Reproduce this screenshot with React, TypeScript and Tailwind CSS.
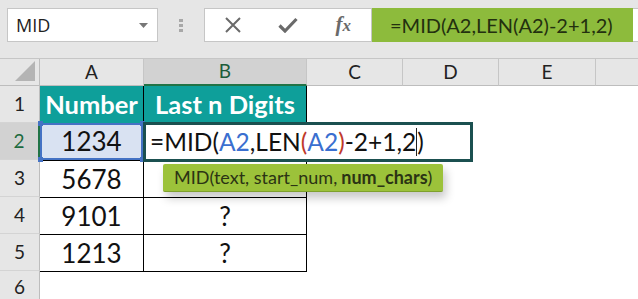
import React from "react";

const FONT = { fontFamily: "Lato, 'Liberation Sans', sans-serif" };

const cols = [
  { k: "A", w: 104 },
  { k: "B", w: 163 },
  { k: "C", w: 96 },
  { k: "D", w: 96 },
  { k: "E", w: 97 },
];

function RowHead({ n, active }: { n: number; active?: boolean }) {
  return (
    <div
      className={
        "w-[40px] shrink-0 flex items-center justify-center text-[19px] border-b border-[#d4d4d4] " +
        (active
          ? "bg-[#d2d2d2] text-[#1d6b3f] border-r-2 border-r-[#217346]"
          : "bg-[#e6e6e6] text-[#222] border-r border-r-[#bdbdbd]")
      }
    >
      {n}
    </div>
  );
}

export default function App() {
  const data = ["1234", "5678", "9101", "1213"];
  return (
    <div className="w-[638px] h-[299px] overflow-hidden bg-white relative" style={FONT}>
      {/* top formula bar */}
      <div className="h-[58px] bg-[#e6e6e6] flex items-start pt-[8px] pl-[7px]">
        <div className="w-[151px] h-[34px] bg-white border border-[#c6c6c6] flex items-center justify-between pl-[8px] pr-[9px]">
          <span className="text-[18px] text-[#222]" style={{ fontFamily: "'Open Sans', sans-serif" }}>MID</span>
          <svg width="9" height="5" viewBox="0 0 9 5">
            <path d="M0 0 L9 0 L4.5 5 Z" fill="#777" />
          </svg>
        </div>
        <div className="w-[46px] h-[34px] flex flex-col items-center justify-center gap-[2px]">
          <div className="w-[4px] h-[3px] bg-[#a8a8a8]" />
          <div className="w-[4px] h-[3px] bg-[#a8a8a8]" />
          <div className="w-[4px] h-[3px] bg-[#a8a8a8]" />
        </div>
        <div className="w-[168px] h-[34px] bg-white border border-[#c6c6c6] flex items-center">
          <div className="w-[56px] flex justify-center">
            <svg width="18" height="18" viewBox="0 0 18 18">
              <path d="M2 2 L16 16 M16 2 L2 16" stroke="#6a6a6a" strokeWidth="2" />
            </svg>
          </div>
          <div className="w-[56px] flex justify-center">
            <svg width="20" height="16" viewBox="0 0 20 16">
              <path d="M1.5 8.5 L7 14 L18.5 2" stroke="#6a6a6a" strokeWidth="3.2" fill="none" />
            </svg>
          </div>
          <div className="w-[56px] flex justify-center">
            <span className="text-[21px] italic font-bold text-[#6a6a6a]" style={{ fontFamily: "'Liberation Serif', serif" }}>
              f<span className="text-[17px]">x</span>
            </span>
          </div>
        </div>
        <div className="w-[261px] h-[34px] bg-[#8dbb3c] flex items-center pl-[18px] text-[20px] text-[#23300f]">
          =MID(A2,LEN(A2)-2+1,2)
        </div>
        <div className="flex-1 h-[34px] bg-white border-y border-[#c6c6c6]" />
      </div>

      {/* column headers */}
      <div className="flex h-[28px] border-t border-[#c6c6c6]">
        <div className="w-[40px] shrink-0 bg-[#e6e6e6] border-r border-b border-[#bdbdbd] relative">
          <svg className="absolute right-[4px] bottom-[4px]" width="20" height="20" viewBox="0 0 20 20">
            <path d="M20 0 L20 20 L0 20 Z" fill="#b4b4b4" />
          </svg>
        </div>
        {cols.map((c) => (
          <div
            key={c.k}
            style={{ width: c.w }}
            className={
              "shrink-0 flex items-center justify-center text-[19px] border-r border-[#c6c6c6] " +
              (c.k === "B"
                ? "bg-[#d2d2d2] text-[#1d5c3a] border-b-2 border-b-[#217346]"
                : "bg-[#e6e6e6] text-[#222] border-b border-b-[#bdbdbd]")
            }
          >
            {c.k}
          </div>
        ))}
        <div className="flex-1 bg-[#e6e6e6] border-b border-[#bdbdbd]" />
      </div>

      {/* row 1 */}
      <div className="flex h-[37px]">
        <RowHead n={1} />
        <div className="w-[104px] shrink-0 bg-[#0e9f9a] border-r border-black flex items-center justify-center text-white font-bold text-[25.5px]">
          Number
        </div>
        <div className="w-[163px] shrink-0 bg-[#0e9f9a] border-r border-black flex items-center justify-center text-white font-bold text-[25.5px]">
          Last n Digits
        </div>
      </div>

      {/* row 2 */}
      <div className="flex h-[37px]">
        <RowHead n={2} active />
        <div className="w-[104px] shrink-0 relative bg-[#d9e2f2] border-r border-black flex items-center justify-center text-[26px] text-[#111]">
          1234
          <div className="absolute inset-0 border-2 border-[#4472c4]" />
          <div className="absolute -left-[2px] -top-[2px] w-[5px] h-[5px] bg-[#4472c4]" />
          <div className="absolute -right-[2px] -top-[2px] w-[5px] h-[5px] bg-[#4472c4]" />
          <div className="absolute -left-[2px] -bottom-[2px] w-[5px] h-[5px] bg-[#4472c4]" />
          <div className="absolute -right-[2px] -bottom-[2px] w-[5px] h-[5px] bg-[#4472c4]" />
        </div>
        <div className="w-[163px] shrink-0 border-r border-black" />
      </div>

      {/* rows 3-5 */}
      {[1, 2, 3].map((i) => (
        <div key={i} className="flex h-[37px]">
          <RowHead n={i + 2} />
          <div className="w-[104px] shrink-0 border-r border-t border-black flex items-center justify-center text-[26px] text-[#111]">
            {data[i]}
          </div>
          <div className="w-[163px] shrink-0 border-r border-t border-black flex items-center justify-center text-[26px] text-[#111]">
            {i === 1 ? "" : "?"}
          </div>
        </div>
      ))}

      {/* row 6 */}
      <div className="flex h-[28px]">
        <div className="w-[40px] shrink-0 bg-[#e6e6e6] border-r border-[#bdbdbd] flex items-start justify-center pt-[2px] text-[19px] text-[#222]">
          6
        </div>
        <div className="w-[267px] shrink-0 border-t border-black" />
      </div>

      {/* edit overlay */}
      <div className="absolute left-[143px] top-[122px] w-[330px] h-[40px] bg-white border-[3px] border-[#1b5050] flex items-center pl-[4px] text-[24.5px] text-[#111] whitespace-nowrap">
        <span>=MID(</span>
        <span className="text-[#3a6fd0]">A2</span>
        <span>,LEN</span>
        <span className="text-[#c0392b]">(</span>
        <span className="text-[#3a6fd0]">A2</span>
        <span className="text-[#c0392b]">)</span>
        <span>-2+1,2</span>
        <span className="inline-block w-[1px] h-[28px] bg-[#222]" />
        <span>)</span>
      </div>

      {/* tooltip */}
      <div className="absolute left-[163px] top-[164px] w-[280px] h-[28px] bg-[#9cc23a] rounded-[2px] flex items-center pl-[11px] text-[18px] text-[#2b3314] whitespace-nowrap shadow-[3px_6px_10px_rgba(0,0,0,0.22)] border-b border-[#7ea02c]">
        MID(text, start_num, <span className="font-bold ml-[4px]">num_chars</span>)
      </div>
    </div>
  );
}
